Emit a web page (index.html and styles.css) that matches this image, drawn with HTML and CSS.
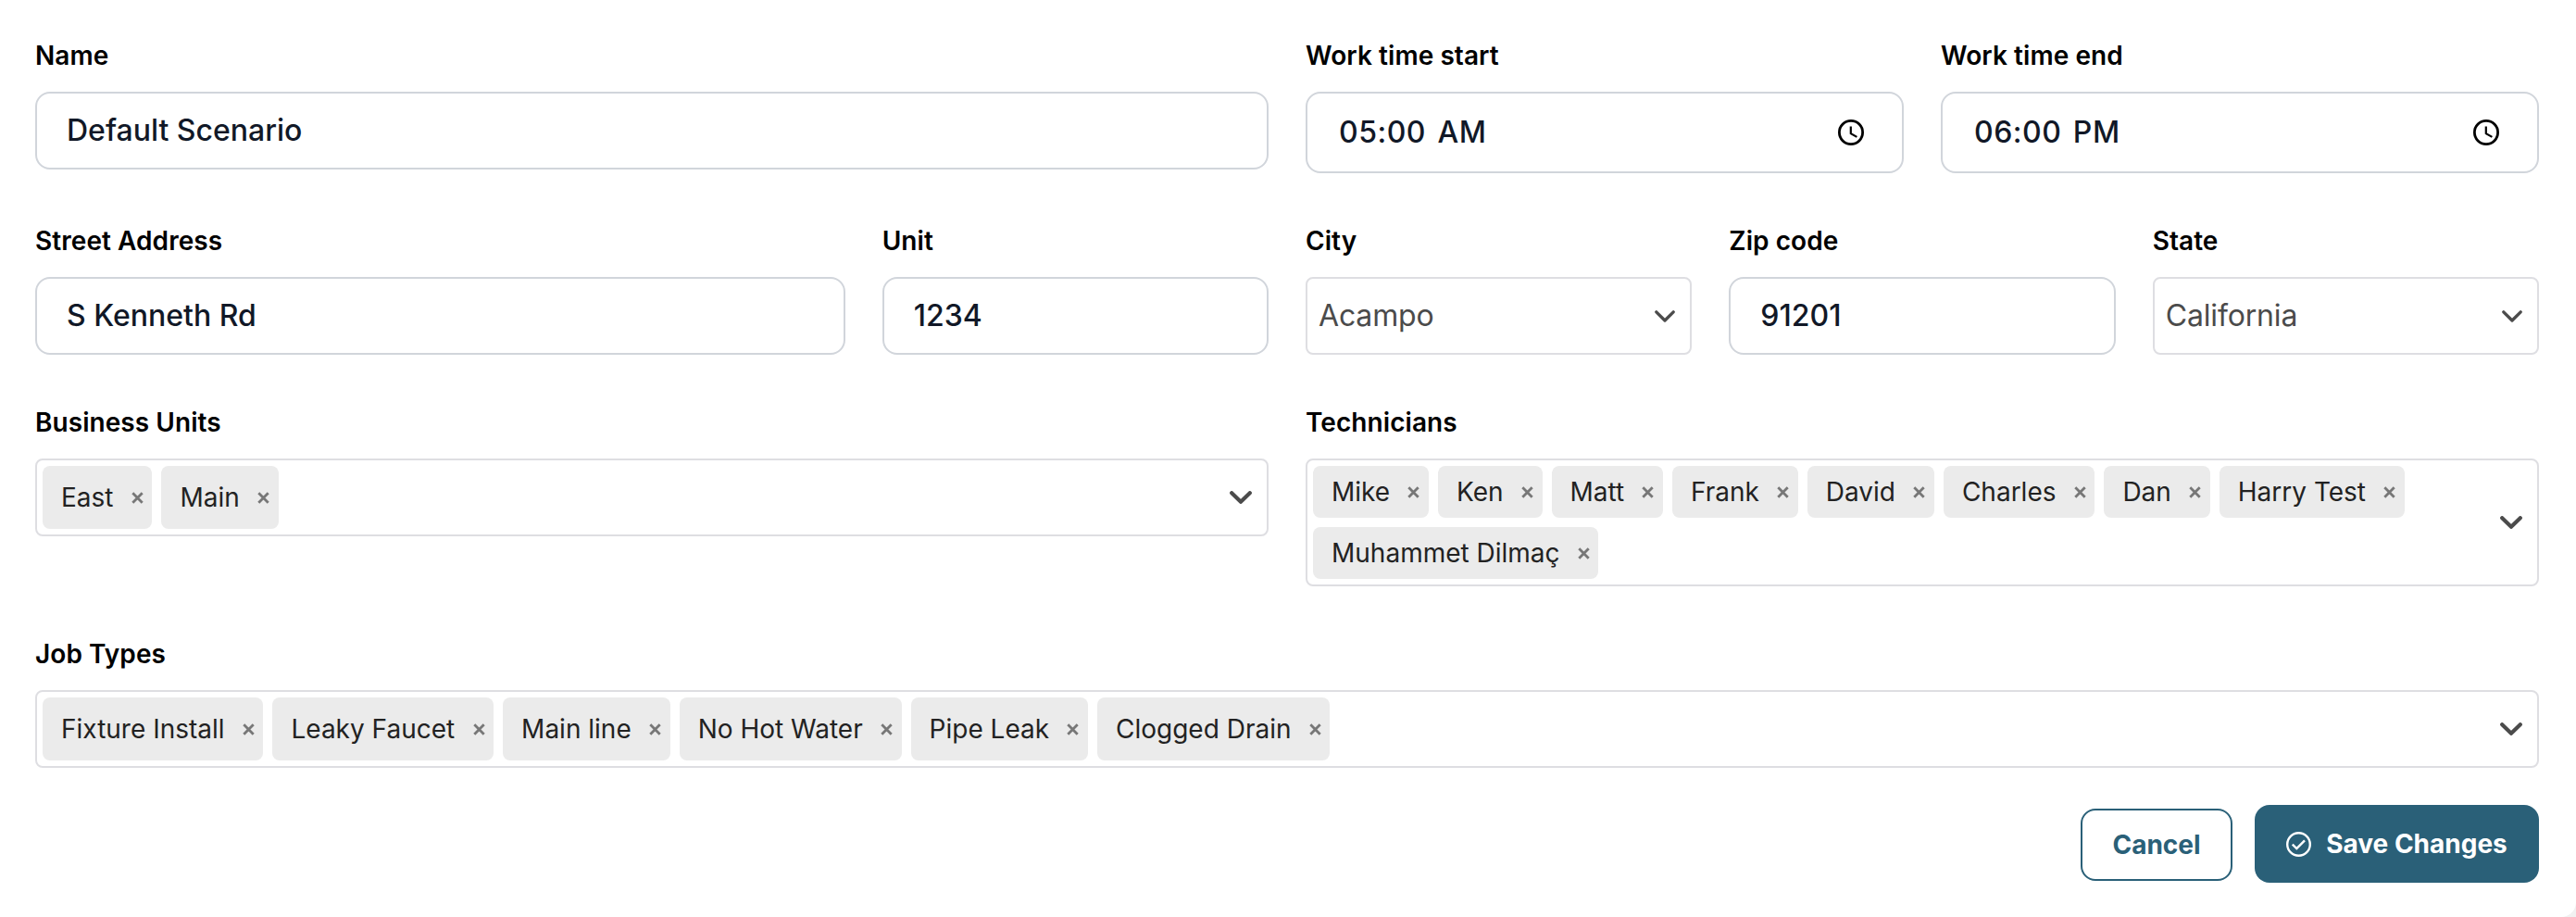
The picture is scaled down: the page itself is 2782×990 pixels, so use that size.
FILE: index.html
```
<!DOCTYPE html>
<html lang="en">
<head>
<meta charset="utf-8">
<title>Edit Scenario</title>
<link rel="stylesheet" href="styles.css">
</head>
<body>
<svg class="defs" width="0" height="0">
  <symbol id="x" viewBox="0 0 13 13"><path d="M1.3 1.3 11.7 11.7M11.7 1.3 1.3 11.7" fill="none" stroke="currentColor" stroke-width="2.8"/></symbol>
  <symbol id="chev" viewBox="0 0 24 14"><path d="M2.2 2.2 12 11.8 21.8 2.2" fill="none" stroke="currentColor" stroke-width="4.2" stroke-linecap="round" stroke-linejoin="round"/></symbol>
  <symbol id="chev-thin" viewBox="0 0 22 13"><path d="M1.8 1.8 11 11 20.2 1.8" fill="none" stroke="currentColor" stroke-width="3.3" stroke-linecap="round" stroke-linejoin="round"/></symbol>
  <symbol id="clock" viewBox="0 0 28 28"><circle cx="14" cy="14" r="12.6" fill="none" stroke="currentColor" stroke-width="2.8"/><path d="M13.8 7.4V15.2L20.4 18.9" fill="none" stroke="currentColor" stroke-width="2.2"/></symbol>
</svg>
<form class="card">
  <div class="grid">
    <div class="field w6"><div class="label">Name</div><div class="input">Default Scenario</div></div>
    <div class="field w3"><div class="label">Work time start</div><div class="input time"><span>05:00 AM</span><svg class="clock"><use href="#clock"/></svg></div></div>
    <div class="field w3"><div class="label">Work time end</div><div class="input time"><span>06:00 PM</span><svg class="clock"><use href="#clock"/></svg></div></div>

    <div class="field w4"><div class="label">Street Address</div><div class="input">S Kenneth Rd</div></div>
    <div class="field w2"><div class="label">Unit</div><div class="input">1234</div></div>
    <div class="field w2"><div class="label">City</div><div class="select"><span>Acampo</span><svg class="chev thin"><use href="#chev-thin"/></svg></div></div>
    <div class="field w2"><div class="label">Zip code</div><div class="input">91201</div></div>
    <div class="field w2"><div class="label">State</div><div class="select"><span>California</span><svg class="chev thin"><use href="#chev-thin"/></svg></div></div>

    <div class="field w6"><div class="label">Business Units</div>
      <div class="multi"><div class="chips">
        <span class="chip">East<svg><use href="#x"/></svg></span>
        <span class="chip">Main<svg><use href="#x"/></svg></span>
      </div><svg class="chev"><use href="#chev"/></svg></div>
    </div>
    <div class="field w6"><div class="label">Technicians</div>
      <div class="multi"><div class="chips">
        <span class="chip">Mike<svg><use href="#x"/></svg></span>
        <span class="chip">Ken<svg><use href="#x"/></svg></span>
        <span class="chip">Matt<svg><use href="#x"/></svg></span>
        <span class="chip">Frank<svg><use href="#x"/></svg></span>
        <span class="chip">David<svg><use href="#x"/></svg></span>
        <span class="chip">Charles<svg><use href="#x"/></svg></span>
        <span class="chip">Dan<svg><use href="#x"/></svg></span>
        <span class="chip">Harry Test<svg><use href="#x"/></svg></span>
        <span class="chip">Muhammet Dilmaç<svg><use href="#x"/></svg></span>
      </div><svg class="chev"><use href="#chev"/></svg></div>
    </div>

    <div class="field w12"><div class="label">Job Types</div>
      <div class="multi"><div class="chips">
        <span class="chip">Fixture Install<svg><use href="#x"/></svg></span>
        <span class="chip">Leaky Faucet<svg><use href="#x"/></svg></span>
        <span class="chip">Main line<svg><use href="#x"/></svg></span>
        <span class="chip">No Hot Water<svg><use href="#x"/></svg></span>
        <span class="chip">Pipe Leak<svg><use href="#x"/></svg></span>
        <span class="chip">Clogged Drain<svg><use href="#x"/></svg></span>
      </div><svg class="chev"><use href="#chev"/></svg></div>
    </div>
  </div>
  <div class="actions">
    <div class="btn cancel">Cancel</div>
    <div class="btn save"><svg class="check" viewBox="0 0 27 27"><circle cx="13.5" cy="13.5" r="12.3"/><path d="M6.8 13.6 11.3 18 20 9.3"/></svg>Save Changes</div>
  </div>
</form>
</body>
</html>
```

FILE: styles.css
```
* { box-sizing: border-box; }
body { margin: 0; background: #f1f1f1; font-family: Inter, "Liberation Sans", sans-serif; }
.defs { display: block; height: 0; }
svg { flex: none; }
.card { height: 990px; padding: 39px 40px 0 38px; background: #fff; border-radius: 0 0 16px 0; }
.grid { display: grid; grid-template-columns: repeat(12, 1fr); column-gap: 40px; row-gap: 52px; align-items: start; }
.w2 { grid-column: span 2; }
.w3 { grid-column: span 3; }
.w4 { grid-column: span 4; }
.w6 { grid-column: span 6; }
.w12 { grid-column: span 12; }
.label { height: 40px; margin-bottom: 20px; line-height: 42px; font-size: 28px; font-weight: 600; letter-spacing: 0.06px; color: #000; white-space: nowrap; }
.input { display: flex; align-items: center; height: 84px; padding: 0 32px; border: 2px solid #d1d5db; border-radius: 16px; font-size: 32px; font-weight: 500; line-height: 40px; color: #111827; white-space: nowrap; }
.time { justify-content: space-between; height: 88px; padding: 0 41px 0 34px; letter-spacing: 0.5px; word-spacing: 3.5px; }
.clock { width: 28px; height: 28px; color: #000; }
.select { display: flex; align-items: center; justify-content: space-between; height: 84px; padding: 0 16px 0 12px; border: 2px solid #dedee2; border-radius: 8px; font-size: 32px; line-height: 40px; letter-spacing: -0.15px; color: #4b4b4b; }
.select span { padding-bottom: 1px; }
.chev { width: 24px; height: 14px; color: #4b4b4b; }
.thin { width: 22px; height: 13px; }
.multi { display: flex; align-items: center; min-height: 84px; padding: 6px 16px 6px 6px; border: 2px solid #dedee2; border-radius: 8px; }
.chips { display: flex; flex: 1; flex-wrap: wrap; gap: 10px; align-self: stretch; padding-right: 80px; }
.chip { display: flex; align-items: center; min-height: 56px; padding: 0 9.6px 0 20px; border-radius: 8px; background: #ebebeb; font-size: 28px; color: #222; white-space: nowrap; }
.chip svg { width: 13px; height: 13px; margin-left: 19.3px; color: #777; }
.actions { display: flex; align-items: center; justify-content: flex-end; gap: 24px; margin-top: 40px; }
.btn { display: flex; align-items: center; justify-content: center; font-size: 28px; font-weight: 700; }
.cancel { width: 164px; height: 78px; margin-top: 2px; border: 2px solid #2a6078; border-radius: 16px; color: #2a6078; }
.save { width: 307px; height: 84px; gap: 16px; border-radius: 16px; background: #2a6078; color: #fff; }
.check { width: 27px; height: 27px; fill: none; stroke: #fff; stroke-width: 2.4; }
```
